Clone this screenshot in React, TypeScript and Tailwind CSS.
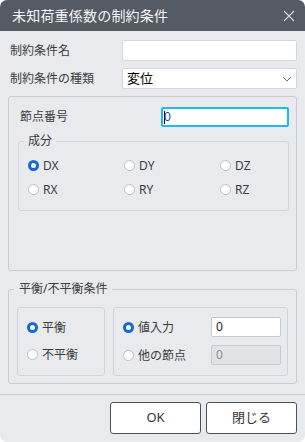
import React from 'react';

const font = { fontFamily: '"Noto Sans", "Noto Sans CJK JP", sans-serif' };

function Radio({ checked, label, className = '' }: { checked?: boolean; label: string; className?: string }) {
  return (
    <label className={`flex items-center gap-[4px] text-[12px] leading-[17px] text-[#3a3d42] ${className}`}>
      {checked ? (
        <span className="w-[11px] h-[11px] rounded-full border-[3.5px] border-[#1667d9] bg-white" />
      ) : (
        <span className="w-[11px] h-[11px] rounded-full border border-[#b9bdc3] bg-white" />
      )}
      <span>{label}</span>
    </label>
  );
}

export default function App() {
  return (
    <div className="w-[305px] h-[442px] bg-white" style={font}>
      <div className="w-full h-full rounded-[7px] overflow-hidden bg-[#e9eaed] flex flex-col">
        {/* title */}
        <div className="h-[31px] shrink-0 bg-[#555b63] flex items-center justify-between pl-[12px] pr-[10px]">
          <span className="text-[14px] text-[#f4f5f6] tracking-[0.2px]">未知荷重係数の制約条件</span>
          <svg width="12" height="12" viewBox="0 0 12 12">
            <path d="M1 1L11 11M11 1L1 11" stroke="#d5d8dc" strokeWidth="1.1" />
          </svg>
        </div>

        <div className="px-[8px] pt-[9px] flex flex-col">
          <div className="flex items-center h-[21px]">
            <span className="w-[114px] pl-[2px] text-[12px] text-[#3a3d42]">制約条件名</span>
            <div className="flex-1 h-[21px] bg-white border border-[#d3d7dc] rounded-[2px]" />
          </div>
          <div className="flex items-center h-[21px] mt-[7px]">
            <span className="w-[114px] pl-[2px] text-[12px] text-[#3a3d42]">制約条件の種類</span>
            <div className="flex-1 h-[21px] bg-white border border-[#d3d7dc] rounded-[2px] flex items-center justify-between pl-[4px] pr-[4px]">
              <span className="text-[13px] text-black">変位</span>
              <svg width="10" height="6" viewBox="0 0 10 6">
                <path d="M1 1L5 5L9 1" stroke="#6b6f75" strokeWidth="1" fill="none" />
              </svg>
            </div>
          </div>

          {/* group 1 */}
          <div className="mt-[7px] h-[175px] border border-[#c8ccd1] rounded-[3px] pt-[10px] pl-[9px] pr-[7px]">
            <div className="flex items-center justify-between h-[20px]">
              <span className="pl-[2px] text-[12px] text-[#3a3d42]">節点番号</span>
              <div className="w-[128px] h-[20px] bg-white border-2 border-[#1cbcf2] rounded-[2px] flex items-center pl-[1px]">
                <span className="w-px h-[13px] bg-black" />
                <span className="text-[12px] text-[#1a4fa0] -ml-px">0</span>
              </div>
            </div>
            <div className="relative mt-[14px] h-[70px] border border-[#d0d4d8] rounded-[3px] pl-[9px] pt-[15px]">
              <span className="absolute -top-[9px] left-[5px] px-[4px] bg-[#e9eaed] text-[12px] text-[#3a3d42] leading-[16px]">成分</span>
              <div className="grid grid-cols-[96px_96px_1fr] gap-y-[7px]">
                <Radio checked label="DX" />
                <Radio label="DY" />
                <Radio label="DZ" />
                <Radio label="RX" />
                <Radio label="RY" />
                <Radio label="RZ" />
              </div>
            </div>
          </div>

          {/* group 2 */}
          <div className="relative mt-[18px] h-[95px] border border-[#c8ccd1] rounded-[3px] pt-[17px] pl-[8px] pr-[8px] flex gap-[8px]">
            <span className="absolute -top-[9px] left-[5px] px-[5px] bg-[#e9eaed] text-[12px] text-[#3a3d42] leading-[16px]">平衡/不平衡条件</span>
            <div className="w-[88px] h-[69px] border border-[#d0d4d8] rounded-[3px] pl-[9px] pt-[11px] flex flex-col gap-[10px]">
              <Radio checked label="平衡" />
              <Radio label="不平衡" />
            </div>
            <div className="flex-1 h-[69px] border border-[#d0d4d8] rounded-[3px] pl-[9px] pr-[6px] pt-[9px] flex flex-col gap-[8px]">
              <div className="flex items-center justify-between h-[20px]">
                <Radio checked label="値入力" />
                <div className="w-[70px] h-[20px] bg-white border border-[#c6cace] rounded-[2px] flex items-center pl-[4px] text-[12px] text-[#1a1a1a]">0</div>
              </div>
              <div className="flex items-center justify-between h-[20px]">
                <Radio label="他の節点" />
                <div className="w-[70px] h-[20px] bg-[#e1e3e6] border border-[#c6cace] rounded-[2px] flex items-center pl-[4px] text-[12px] text-[#8b8f95]">0</div>
              </div>
            </div>
          </div>
        </div>

        <div className="mt-[10px] h-px bg-[#c8ccd1]" />
        <div className="flex justify-end gap-[5px] pr-[8px] pt-[7px]">
          <button className="w-[91px] h-[32px] bg-white border border-[#4d5157] rounded-[3px] text-[13px] text-[#333]">OK</button>
          <button className="w-[91px] h-[32px] bg-white border border-[#4d5157] rounded-[3px] text-[13px] text-[#333]">閉じる</button>
        </div>
      </div>
    </div>
  );
}
